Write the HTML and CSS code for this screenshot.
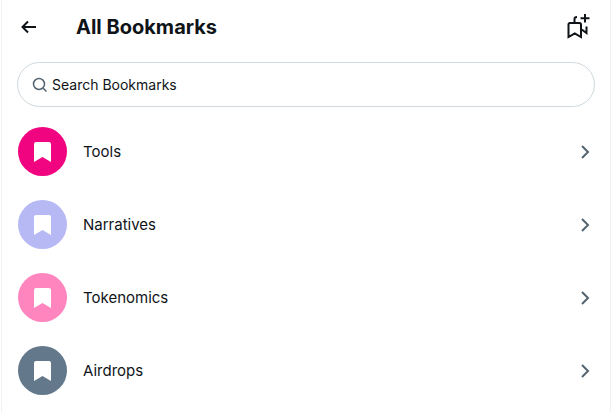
FILE: index.html
```html
<!DOCTYPE html>
<html lang="en">
<head>
    <meta charset="UTF-8">
    <meta name="viewport" content="width=device-width, initial-scale=1.0">
    <title>All Bookmarks</title>
    <link rel="stylesheet" href="styles.css">
</head>
<body>

<main class="column">
    <header class="header">
        <button class="icon-btn" aria-label="Back">
            <svg class="back-icon" viewBox="0 0 18 18"><path d="M16 9H2.5M8 3.500L2.500 9L8 14.500"/></svg>
        </button>
        <h1>All Bookmarks</h1>
        <button class="icon-btn" aria-label="New folder">
            <svg class="add-icon" viewBox="0 0 26 28"><path d="M4.500 24V11.500Q4.500 10 6 10H15.500Q17 10 17 11.500V24L10.750 20.500ZM10.500 10V6Q10.500 4 13 4M17 16L22.500 20V13.500M21 1V9.500M16.500 5.250H25.500"/></svg>
        </button>
    </header>

    <form class="search">
        <svg class="search-icon" viewBox="0 0 16 16"><circle cx="7" cy="7" r="5.500"/><path d="M11 11L14.500 14.500"/></svg>
        <input type="search" placeholder="Search Bookmarks" aria-label="Search Bookmarks">
    </form>

    <nav class="folders">
        <a class="folder" href="#">
            <span class="badge badge-magenta"><svg viewBox="0 0 17 20"><path d="M0 2Q0 0 2 0H15Q17 0 17 2V20L8.500 15L0 20Z"/></svg></span>
            <span class="name">Tools</span>
            <svg class="chevron" viewBox="0 0 10 16"><path d="M2 2L8 8L2 14"/></svg>
        </a>
        <a class="folder" href="#">
            <span class="badge badge-lavender"><svg viewBox="0 0 17 20"><path d="M0 2Q0 0 2 0H15Q17 0 17 2V20L8.500 15L0 20Z"/></svg></span>
            <span class="name">Narratives</span>
            <svg class="chevron" viewBox="0 0 10 16"><path d="M2 2L8 8L2 14"/></svg>
        </a>
        <a class="folder" href="#">
            <span class="badge badge-pink"><svg viewBox="0 0 17 20"><path d="M0 2Q0 0 2 0H15Q17 0 17 2V20L8.500 15L0 20Z"/></svg></span>
            <span class="name">Tokenomics</span>
            <svg class="chevron" viewBox="0 0 10 16"><path d="M2 2L8 8L2 14"/></svg>
        </a>
        <a class="folder" href="#">
            <span class="badge badge-slate"><svg viewBox="0 0 17 20"><path d="M0 2Q0 0 2 0H15Q17 0 17 2V20L8.500 15L0 20Z"/></svg></span>
            <span class="name">Airdrops</span>
            <svg class="chevron" viewBox="0 0 10 16"><path d="M2 2L8 8L2 14"/></svg>
        </a>
    </nav>
</main>

</body>
</html>
```

FILE: styles.css
```css
* {
    margin: 0;
    padding: 0;
    box-sizing: border-box;
}
body {
    background: #fff;
    color: #0f1419;
    font-family: Inter, "Liberation Sans", sans-serif;
    font-size: 15px;
}
svg {
    display: block;
    flex: none;
    fill: none;
    stroke: currentColor;
    stroke-width: 2;
}
.column {
    min-height: 100vh;
    margin-left: 1px;
    border-left: 1px solid #eff3f4;
    border-right: 1px solid #eff3f4;
}
.header {
    display: flex;
    align-items: center;
    height: 54px;
    padding: 0 20px 0 18px;
}
.header h1 {
    flex: 1;
    margin-left: 38px;
    font-size: 20px;
    line-height: 28px;
    font-weight: 700;
}
.icon-btn {
    border: none;
    background: none;
    color: inherit;
    cursor: pointer;
}
.back-icon {
    width: 18px;
    height: 18px;
}
.add-icon {
    width: 26px;
    height: 28px;
}
.search {
    display: flex;
    align-items: center;
    gap: 4px;
    height: 45px;
    margin: 8px 15px;
    padding: 0 14px;
    border: 1px solid #cfd9de;
    border-radius: 23px;
}
.search-icon {
    width: 16px;
    height: 16px;
    color: #536471;
    stroke-width: 1.5;
}
.search input {
    flex: 1;
    min-width: 0;
    border: none;
    outline: none;
    background: none;
    font: inherit;
    font-size: 14px;
    line-height: 20px;
}
.search input::placeholder {
    color: #0f1419;
    opacity: 1;
}
.folder {
    display: flex;
    align-items: center;
    gap: 16px;
    padding: 12px 20px 12px 16px;
    color: inherit;
    text-decoration: none;
}
.folder:hover {
    background: #f7f9f9;
}
.badge {
    display: grid;
    place-items: center;
    width: 49px;
    height: 49px;
    border-radius: 50%;
}
.badge svg {
    width: 17px;
    height: 20px;
    fill: #fff;
    stroke: none;
}
.badge-magenta {
    background: #f0047f;
}
.badge-lavender {
    background: #b7b9f5;
}
.badge-pink {
    background: #ff85bf;
}
.badge-slate {
    background: #64788b;
}
.name {
    flex: 1;
}
.chevron {
    width: 10px;
    height: 16px;
    color: #536471;
}
```
